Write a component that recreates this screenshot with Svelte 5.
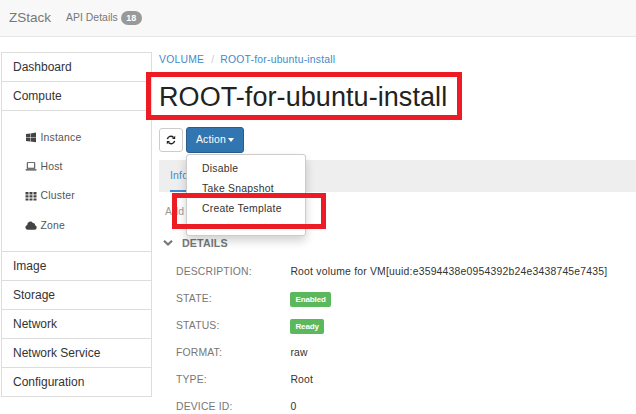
<script>
  const computeItems = ['Instance', 'Host', 'Cluster', 'Zone'];
  const sections = ['Image', 'Storage', 'Network', 'Network Service', 'Configuration'];
  const details = [
    { label: 'DESCRIPTION:', value: 'Root volume for VM[uuid:e3594438e0954392b24e3438745e7435]' },
    { label: 'STATE:', value: 'Enabled', badge: true },
    { label: 'STATUS:', value: 'Ready', badge: true },
    { label: 'FORMAT:', value: 'raw' },
    { label: 'TYPE:', value: 'Root' },
    { label: 'DEVICE ID:', value: '0' }
  ];
</script>

<div class="page">
  <header>
    <span class="brand">ZStack</span>
    <span class="api">API Details</span>
    <span class="count">18</span>
  </header>

  <div class="body">
    <nav>
      <div class="section">Dashboard</div>
      <div class="section">Compute</div>
      <ul>
        {#each computeItems as item}
          <li>
            <svg width="12" height="11" viewBox="0 0 12 11">
              {#if item === 'Instance'}
                <path d="M1 2.1 5 1.5V5.2H1ZM5.5 1.4 11 .6V5.2H5.5ZM1 5.7H5V9.4L1 8.9ZM5.5 5.7H11V10.3L5.5 9.5Z" />
              {:else if item === 'Host'}
                <path d="M2.5 1.2H9.5Q10.2 1.2 10.2 2V7.7H1.8V2Q1.8 1.2 2.5 1.2ZM2.8 2.1V6.8H9.2V2.1ZM.6 8.2H11.5V9Q11.3 9.6 10.6 9.6H1.5Q.8 9.6 .6 9Z" fill-rule="evenodd" />
              {:else if item === 'Cluster'}
                <path d="M.5 1H3.5V3.4H.5ZM4.5 1H7.5V3.4H4.5ZM8.5 1H11.5V3.4H8.5ZM.5 4.2H3.5V6.6H.5ZM4.5 4.2H7.5V6.6H4.5ZM8.5 4.2H11.5V6.6H8.5ZM.5 7.4H3.5V9.5H.5ZM4.5 7.4H7.5V9.5H4.5ZM8.5 7.4H11.5V9.5H8.5Z" />
              {:else}
                <path d="M3 9.8A2.5 2.5 0 0 1 2.2 4.9 3.1 3.1 0 0 1 7.9 3 1.9 1.9 0 0 1 10 5.3 2.3 2.3 0 0 1 9.7 9.8Z" />
              {/if}
            </svg>
            <span>{item}</span>
          </li>
        {/each}
      </ul>
      {#each sections as name}
        <div class="section">{name}</div>
      {/each}
    </nav>

    <main>
      <div class="crumbs"><span>VOLUME</span><i>/</i><span>ROOT-for-ubuntu-install</span></div>
      <h1>ROOT-for-ubuntu-install<b class="mark title-mark"></b></h1>
      <div class="tools">
        <button class="refresh" aria-label="Refresh">
          <svg width="10" height="10" viewBox="0 0 10 10">
            <path d="M1.4 4.2A3.5 3.5 0 0 1 7.5 2.5M8.6 5.8A3.5 3.5 0 0 1 2.5 7.5" fill="none" stroke="#222" stroke-width="1.4" />
            <path d="M9.2 .8V4H6ZM.8 9.2V6H4Z" fill="#222" />
          </svg>
        </button>
        <div class="dropdown">
          <button class="action">Action<span class="caret"></span></button>
          <div class="menu">
            <div>Disable</div>
            <div>Take Snapshot</div>
            <div>Create Template</div>
          </div>
          <b class="mark menu-mark"></b>
        </div>
      </div>
      <div class="tabs"><span class="tab">Info</span></div>
      <div class="add">Add</div>
      <h2>
        <svg width="10" height="8" viewBox="0 0 10 8"><path d="M1 1.8 5 5.6 9 1.8" fill="none" stroke="#777" stroke-width="2.2" /></svg>
        DETAILS
      </h2>
      <dl>
        {#each details as row}
          <div class="row">
            <dt>{row.label}</dt>
            <dd>{#if row.badge}<span class="badge">{row.value}</span>{:else}{row.value}{/if}</dd>
          </div>
        {/each}
      </dl>
    </main>
  </div>
</div>

<style>
  :global(body) { margin: 0; overflow: hidden; }
  .page {
    width: 636px; height: 414px; overflow: hidden; background: #fff; color: #333;
    font: 10.4px/14px "Liberation Sans", Arial, sans-serif; letter-spacing: .21px;
  }
  * { box-sizing: border-box; }
  header {
    height: 37px; padding: 0 9px 1px; display: flex; align-items: center;
    background: #f8f8f8; border-bottom: 1px solid #e7e7e7; color: #777;
  }
  .brand { width: 57px; font-size: 13.5px; letter-spacing: 0; }
  .api { letter-spacing: .04px; }
  .count {
    width: 21px; height: 14px; margin-left: 3px; border-radius: 7px; background: #999; color: #fff;
    font-size: 9px; font-weight: bold; text-align: center; letter-spacing: .2px;
  }
  .body { display: flex; }
  nav { width: 151px; height: 345px; margin: 15px 0 0 1px; flex: none; border: 1px solid #ddd; border-top: 0; }
  .section {
    height: 29px; padding: 0 11px; border-top: 1px solid #ddd;
    font-size: 12px; line-height: 28px; letter-spacing: 0;
  }
  ul { list-style: none; margin: 0; padding: 12px 0 0 23px; height: 141px; border-top: 1px solid #ddd; }
  li { height: 29.3px; display: flex; align-items: center; gap: 3.5px; color: #555; }
  li svg { fill: #444; }
  main { flex: 1; padding: 15px 0 0 7px; min-width: 0; }
  .crumbs { height: 20px; padding-top: 1px; color: #428bca; }
  .crumbs i { color: #ccc; font-style: normal; margin: 0 6px 0 7px; }
  h1 {
    position: relative; margin: 0; height: 48px; font-size: 27px; line-height: 50px;
    font-weight: normal; letter-spacing: .07px; color: #222;
  }
  .mark { position: absolute; border: 5px solid #ed1c24; z-index: 3; }
  .title-mark { left: -13px; top: 0; width: 316px; height: 48px; }
  .tools { display: flex; gap: 3px; height: 40px; padding-top: 7px; }
  button { font: inherit; letter-spacing: inherit; margin: 0; padding: 0; display: flex; align-items: center; justify-content: center; border-radius: 3px; }
  .refresh { width: 24px; height: 24px; margin-top: 1px; background: #fff; border: 1px solid #ccc; }
  .dropdown { position: relative; }
  .action { width: 58px; height: 26px; background: #3276b1; border: 1px solid #285e8e; color: #fff; }
  .caret { border: 3.5px solid transparent; border-width: 4px 3px 0; border-top-color: #fff; margin-left: 2px; }
  .menu {
    position: absolute; z-index: 2; left: 0; top: 27px; width: 120px; height: 82px; padding: 4px 0 0 15px;
    background: #fff; border: 1px solid #ccc; border-radius: 3px; box-shadow: 0 5px 10px rgba(0, 0, 0, .18);
    color: #333; white-space: nowrap; letter-spacing: .24px;
  }
  .menu div { height: 19.8px; line-height: 19px; }
  .menu-mark { left: -14px; top: 66px; width: 154px; height: 36px; }
  .tabs { height: 32px; padding-left: 11px; background: #eee; display: flex; }
  .tab { width: 40px; height: 32px; line-height: 31px; color: #428bca; border-bottom: 2px solid #428bca; }
  .add { padding: 13px 0 0 6px; height: 42px; color: #999; }
  h2 { display: flex; align-items: center; gap: 9px; height: 17px; margin: 0; padding-left: 4px; color: #777; font-size: 10.7px; letter-spacing: .1px; }
  dl { margin: 7px 0 0 17px; }
  .row { display: flex; height: 27px; align-items: center; }
  dt { width: 114.4px; color: #777; letter-spacing: .16px; }
  dd { margin: 0; }
  .badge {
    display: block; height: 15px; padding: 0 5px; margin-top: 1px; border-radius: 2px; background: #5cb85c; color: #fff;
    font-size: 8px; line-height: 15px; font-weight: bold; letter-spacing: -.1px;
  }
</style>
